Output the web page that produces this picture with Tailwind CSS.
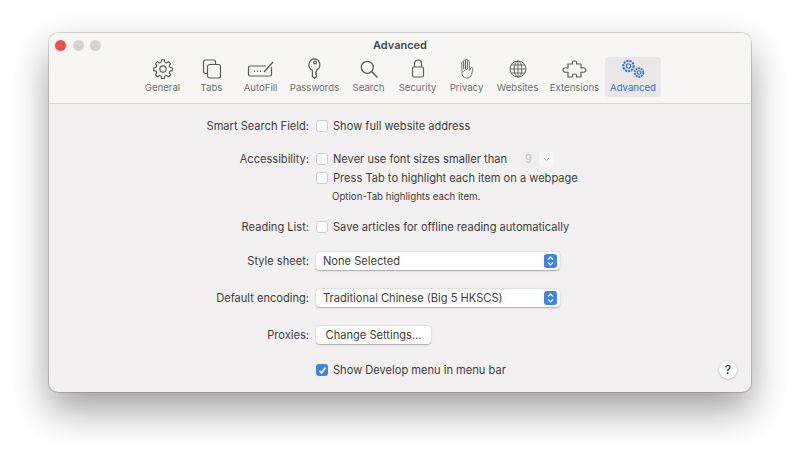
<!DOCTYPE html>
<html lang="en">
<head>
  <meta charset="UTF-8">
  <title>Safari Advanced Preferences</title>
  <script src="https://cdn.jsdelivr.net/npm/@tailwindcss/browser@4"></script>
</head>
<body class="bg-white w-[800px] h-[457px] overflow-hidden font-['Inter','Liberation_Sans',sans-serif] text-[#404040]">
  <div class="pt-[33px] pl-[49px]">
    <div class="w-[702px] h-[359px] rounded-[9px] bg-[#f2f0f1] overflow-hidden flex flex-col shadow-[0_0_0_1px_rgba(0,0,0,0.14),0_18px_38px_rgba(0,0,0,0.38)]">

      <!-- toolbar -->
      <div class="relative h-[71px] bg-[#f8f6f5] border-b border-[#d9d7d6] shrink-0">
        <div class="absolute left-[6px] top-[7px] flex gap-[6.500px]">
          <span class="w-[11px] h-[11px] rounded-full bg-[#f0504c]"></span>
          <span class="w-[11px] h-[11px] rounded-full bg-[#d4d3d2]"></span>
          <span class="w-[11px] h-[11px] rounded-full bg-[#d4d3d2]"></span>
        </div>
        <div class="pt-[5px] text-center text-[11px] leading-[14px] font-semibold text-[#4a4a4a]">Advanced</div>
        <div class="flex pl-[89px] pt-[5px] text-[9.600px] leading-[12px] text-[#707070]">
          <div class="w-[49px] h-[40px] flex flex-col items-center">
            <svg class="w-[20px] h-[20px] mt-[2px]" viewBox="0 0 24 24" fill="none" stroke="#5c5c5c" stroke-width="1.400" stroke-linejoin="round"><path d="M10.300 1.500h3.400l.6 2.900 1.900.8 2.500-1.600 2.400 2.400-1.600 2.500.8 1.900 2.900.6v3.400l-2.900.6-.8 1.900 1.600 2.500-2.400 2.400-2.500-1.600-1.900.8-.6 2.900h-3.400l-.6-2.900-1.900-.8-2.500 1.600-2.400-2.400 1.600-2.500-.8-1.900-2.900-.6v-3.400l2.900-.6.8-1.900-1.600-2.500 2.400-2.400 2.500 1.600 1.900-.8z" transform="translate(0 -.5)"/><circle cx="12" cy="12" r="3.800"/></svg>
            <span class="mt-[3px]">General</span>
          </div>
          <div class="w-[49px] h-[40px] flex flex-col items-center">
            <svg class="w-[20px] h-[20px] mt-[2px]" viewBox="0 0 20 20" fill="none" stroke="#5c5c5c" stroke-width="1.200"><path d="M5.500 14.500H3.500a2 2 0 0 1-2-2V3a2 2 0 0 1 2-2h8a2 2 0 0 1 2 2v2.500"/><rect x="5.500" y="5.500" width="13" height="13.500" rx="2"/></svg>
            <span class="mt-[3px]">Tabs</span>
          </div>
          <div class="w-[49px] h-[40px] flex flex-col items-center">
            <svg class="w-[28px] h-[20px] mt-[2px]" viewBox="0 0 28 20" fill="none" stroke="#5c5c5c" stroke-width="1.200"><path d="M19 7H3a1.500 1.500 0 0 0-1.500 1.500v7A1.500 1.500 0 0 0 3 17h20a1.500 1.500 0 0 0 1.500-1.500V8"/><path d="M17 13l9-10" stroke-width="1.500"/><path d="M7 12.200h1M10 12.200h1M13 12.200h1" stroke-width="1.500"/></svg>
            <span class="mt-[3px]">AutoFill</span>
          </div>
          <div class="w-[59px] h-[40px] flex flex-col items-center">
            <svg class="w-[14px] h-[21px] mt-[1px]" viewBox="0 0 14 21" fill="none" stroke="#5c5c5c" stroke-width="1.200" stroke-linejoin="round"><path d="M7 .800a6 6 0 0 0-2.600 11.400V18.500l2.100 1.800 2.100-1.800v-1.300l-1-1 1-1-1-1 1-1v-1.200A6 6 0 0 0 7 .800z"/><circle cx="7" cy="4.500" r="1.300"/></svg>
            <span class="mt-[3px]">Passwords</span>
          </div>
          <div class="w-[49px] h-[40px] flex flex-col items-center">
            <svg class="w-[18px] h-[18px] mt-[3px]" viewBox="0 0 18 18" fill="none" stroke="#5c5c5c" stroke-width="1.300"><circle cx="7.300" cy="7.300" r="6"/><path d="M11.800 11.800L17 17" stroke-width="1.600" stroke-linecap="round"/></svg>
            <span class="mt-[4px]">Search</span>
          </div>
          <div class="w-[49px] h-[40px] flex flex-col items-center">
            <svg class="w-[14px] h-[19px] mt-[2px]" viewBox="0 0 14 19" fill="none" stroke="#5c5c5c" stroke-width="1.200"><rect x="1.500" y="8" width="11" height="10" rx="1.500"/><path d="M3.500 8V4.500a3.500 3.500 0 0 1 7 0V8"/></svg>
            <span class="mt-[4px]">Security</span>
          </div>
          <div class="w-[49px] h-[40px] flex flex-col items-center">
            <svg class="w-[17px] h-[21px] mt-[1px]" viewBox="0 0 16 20" fill="none" stroke="#707070" stroke-width=".9" stroke-linejoin="round" stroke-linecap="round"><path d="M3.500 12.500V4.800a.9.900 0 0 1 1.800 0V10M5.300 10V2.800a.9.900 0 0 1 1.800 0V10M7.100 10V2a.9.900 0 0 1 1.800 0v8M8.900 10V3.200a.9.900 0 0 1 1.800 0V12l1.500-2.400c.6-1 2.200-.4 1.700.8L13 15.500c-.8 2.300-2.400 3.700-4.800 3.700-3 0-4.700-2.200-4.700-5.200z"/></svg>
            <span class="mt-[3px]">Privacy</span>
          </div>
          <div class="w-[53px] h-[40px] flex flex-col items-center">
            <svg class="w-[18px] h-[18px] mt-[3px]" viewBox="0 0 18 18" fill="none" stroke="#5c5c5c" stroke-width=".9"><circle cx="9" cy="9" r="8"/><ellipse cx="9" cy="9" rx="3.800" ry="8"/><path d="M9 1v16M1 9h16M2 5h14M2 13h14"/></svg>
            <span class="mt-[4px]">Websites</span>
          </div>
          <div class="w-[61px] h-[40px] flex flex-col items-center">
            <svg class="w-[25px] h-[18px] mt-[3px]" viewBox="0 0 25 18" fill="none" stroke="#5c5c5c" stroke-width="1.200" stroke-linejoin="round"><path d="M6 4h4.500C10 1 11 1 12.500 1S15 1 14.500 4H19v4c3-.7 5 0 5 2s-2 2.700-5 2v5h-4.500c.5-3-.5-3-2-3s-2.500 0-2 3H6v-5c-3 .7-5 0-5-2s2-2.700 5-2z"/></svg>
            <span class="mt-[4px]">Extensions</span>
          </div>
          <div class="w-[56px] h-[40px] flex flex-col items-center rounded-[4px] bg-[#e9e7e7] text-[#2a6fe0]">
            <svg class="w-[25px] h-[20px] mt-[2px]" viewBox="0 0 25 20" fill="none" stroke="#2a6fe0" stroke-width="1.100" stroke-linejoin="round"><circle cx="7.500" cy="7" r="5.200" stroke-dasharray="2.200 .9" stroke-width="2"/><circle cx="7.500" cy="7" r="2.200"/><circle cx="18" cy="13.500" r="4.300" stroke-dasharray="1.900 .8" stroke-width="1.800"/><circle cx="18" cy="13.500" r="1.800"/></svg>
            <span class="mt-[3px]">Advanced</span>
          </div>
        </div>
      </div>

      <!-- form -->
      <div class="relative flex-1 pl-[267px] text-[11.100px] leading-[14px]">

        <div class="relative h-[14px] mt-[15px] flex items-center gap-[5px]">
          <span class="absolute right-full mr-[7px] whitespace-nowrap">Smart Search Field:</span>
          <span class="w-[12px] h-[12px] rounded-[3px] bg-white border border-[#cfcdcd]"></span>
          <span>Show full website address</span>
        </div>

        <div class="relative h-[14px] mt-[19px] flex items-center gap-[5px]">
          <span class="absolute right-full mr-[7px] whitespace-nowrap">Accessibility:</span>
          <span class="w-[12px] h-[12px] rounded-[3px] bg-white border border-[#cfcdcd]"></span>
          <span>Never use font sizes smaller than</span>
          <span class="ml-[8px] w-[34px] h-[15px] rounded-[3px] bg-[#efeded] flex items-center justify-between text-[#c2c0c0]">
            <span class="pl-[5px]">9</span>
            <span class="w-[15px] h-[15px] rounded-[3px] bg-[#f6f5f5] flex items-center justify-center">
              <svg class="w-[7px] h-[5px]" viewBox="0 0 7 5" fill="none" stroke="#b5b3b3" stroke-width="1"><path d="M1 1l2.500 2.500L6 1"/></svg>
            </span>
          </span>
        </div>

        <div class="h-[14px] mt-[5px] flex items-center gap-[5px]">
          <span class="w-[12px] h-[12px] rounded-[3px] bg-white border border-[#cfcdcd]"></span>
          <span>Press Tab to highlight each item on a webpage</span>
        </div>

        <div class="mt-[5px] pl-[16px] h-[13px] text-[9.700px] leading-[13px]">Option-Tab highlights each item.</div>

        <div class="relative h-[14px] mt-[17px] flex items-center gap-[5px]">
          <span class="absolute right-full mr-[7px] whitespace-nowrap">Reading List:</span>
          <span class="w-[12px] h-[12px] rounded-[3px] bg-white border border-[#cfcdcd]"></span>
          <span>Save articles for offline reading automatically</span>
        </div>

        <div class="relative w-[244px] h-[18px] mt-[18px] pl-[7px] pr-[3px] rounded-[4px] bg-white shadow-[0_0.500px_1.500px_rgba(0,0,0,0.3)] flex items-center justify-between">
          <span class="absolute right-full mr-[7px] whitespace-nowrap">Style sheet:</span>
          <span>None Selected</span>
          <span class="w-[13px] h-[14px] rounded-[3px] bg-[#3d83f0] flex items-center justify-center">
            <svg class="w-[7px] h-[10px]" viewBox="0 0 7 10" fill="none" stroke="#fff" stroke-width="1.200"><path d="M1 3.500L3.500 1 6 3.500M1 6.500L3.500 9 6 6.500"/></svg>
          </span>
        </div>

        <div class="relative w-[244px] h-[18px] mt-[19px] pl-[7px] pr-[3px] rounded-[4px] bg-white shadow-[0_0.500px_1.500px_rgba(0,0,0,0.3)] flex items-center justify-between">
          <span class="absolute right-full mr-[7px] whitespace-nowrap">Default encoding:</span>
          <span>Traditional Chinese (Big 5 HKSCS)</span>
          <span class="w-[13px] h-[14px] rounded-[3px] bg-[#3d83f0] flex items-center justify-center">
            <svg class="w-[7px] h-[10px]" viewBox="0 0 7 10" fill="none" stroke="#fff" stroke-width="1.200"><path d="M1 3.500L3.500 1 6 3.500M1 6.500L3.500 9 6 6.500"/></svg>
          </span>
        </div>

        <div class="relative w-[115px] h-[18px] mt-[19px] rounded-[4px] bg-white shadow-[0_0.500px_1.500px_rgba(0,0,0,0.3)] flex items-center justify-center">
          <span class="absolute right-full mr-[7px] whitespace-nowrap">Proxies:</span>
          <span>Change Settings...</span>
        </div>

        <div class="h-[14px] mt-[19px] flex items-center gap-[5px]">
          <span class="w-[12px] h-[12px] rounded-[3px] bg-[#3d83f0] flex items-center justify-center">
            <svg class="w-[9px] h-[9px]" viewBox="0 0 9 9" fill="none" stroke="#fff" stroke-width="1.600"><path d="M1.500 4.800L3.500 7l4-5.500"/></svg>
          </span>
          <span>Show Develop menu in menu bar</span>
        </div>

        <div class="absolute right-[14px] bottom-[13px] w-[18px] h-[18px] rounded-full bg-white shadow-[0_0.500px_2px_rgba(0,0,0,0.3)] flex items-center justify-center text-[12px] font-medium text-[#333]">?</div>
      </div>
    </div>
  </div>
</body>
</html>
